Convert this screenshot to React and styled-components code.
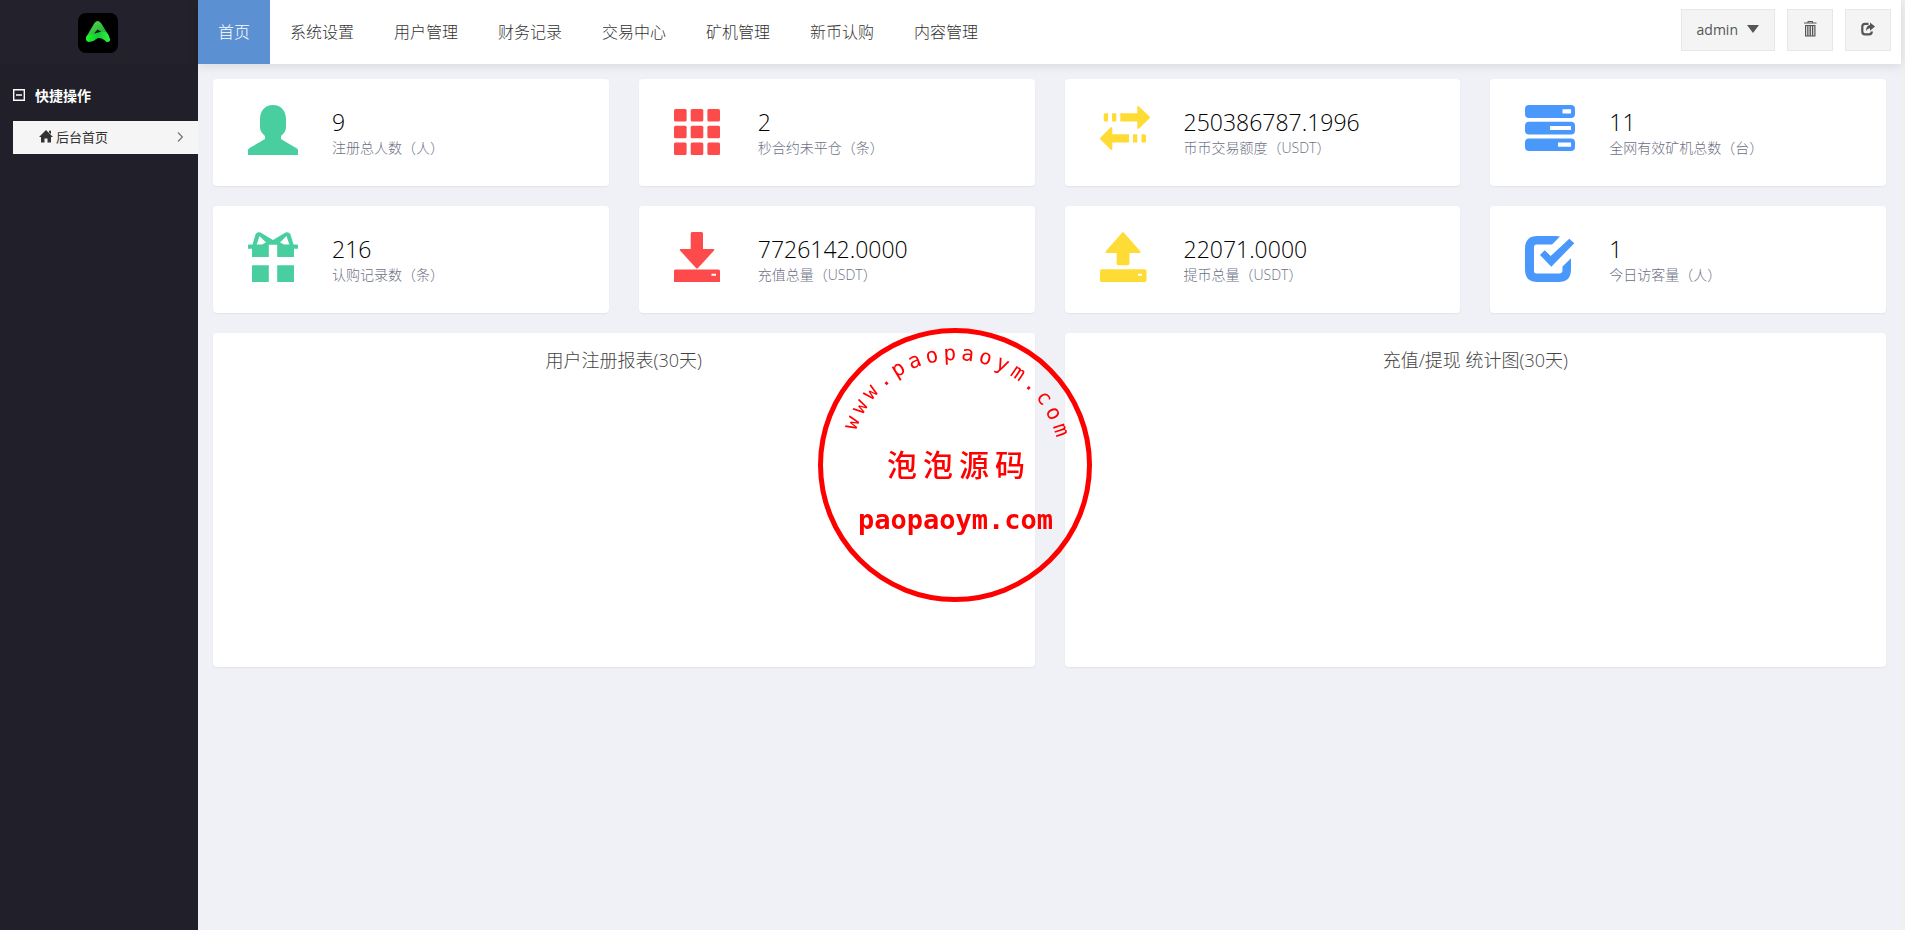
import React from 'react';
import styled, { createGlobalStyle } from 'styled-components';

const menus = ['首页', '系统设置', '用户管理', '财务记录', '交易中心', '矿机管理', '新币认购', '内容管理'];

const stats = [
    { icon: 'user', color: '#49cea0', value: '9', label: '注册总人数（人）' },
    { icon: 'grid', color: '#fd4b4b', value: '2', label: '秒合约未平仓（条）' },
    { icon: 'transfer', color: '#ffdc35', value: '250386787.1996', label: '币币交易额度（USDT）' },
    { icon: 'tasks', color: '#4a98fc', value: '11', label: '全网有效矿机总数（台）' },
    { icon: 'gift', color: '#49cea0', value: '216', label: '认购记录数（条）' },
    { icon: 'save', color: '#fd4b4b', value: '7726142.0000', label: '充值总量（USDT）' },
    { icon: 'open', color: '#ffdc35', value: '22071.0000', label: '提币总量（USDT）' },
    { icon: 'check', color: '#4a98fc', value: '1', label: '今日访客量（人）' },
];

const charts = ['用户注册报表(30天)', '充值/提现 统计图(30天)'];

const shapes = {
    user: <path d="M25 0C33 0 38 6 38 14V22C38 26 36 28.500 33 31V34C38 37 45 41 49 43.500Q50 44.200 50 45V50H0V45Q0 44.200 1 43.500C5 41 12 37 17 34V31C14 28.500 12 26 12 22V14C12 6 17 0 25 0Z" />,
    grid: [4, 20.7, 37.4].map((y) =>
        [0, 16.7, 33.4].map((x) => <rect key={`${x}-${y}`} x={x} y={y} width="12.600" height="12.600" rx="1.500" />)
    ),
    transfer: <path d="M5 8.300H8V16.500H5Q3.700 16.500 3.700 15V9.800Q3.700 8.300 5 8.300ZM12 8.300H16.300V16.500H12ZM20.300 8.300H37.300V1.500Q38 .6 39 1.500L49.500 11.500Q50.300 12.500 49.500 13.500L39 23.500Q38 24.300 37.300 23.500V16.500H20.300ZM12.300 29.300V22.500Q11.500 21.500 10.500 22.500L.5 32.500Q-.3 33.500 .5 34.500L10.500 44.500Q11.500 45.300 12.300 44.500V37.500H29V29.300ZM33 29.300H37.300V37.500H33ZM41.500 29.300H44.700Q46 29.300 46 30.800V36Q46 37.500 44.700 37.500H41.500Z" />,
    tasks: <path fillRule="evenodd" d="M4 0H46Q50 0 50 4V9Q50 13 46 13H4Q0 13 0 9V4Q0 0 4 0ZM37.500 4.200V8.400H46V4.200ZM4 16.700H46Q50 16.700 50 20.700V25.500Q50 29.500 46 29.500H4Q0 29.500 0 25.500V20.700Q0 16.700 4 16.700ZM25 20.900V25.100H46V20.900ZM4 33.400H46Q50 33.400 50 37.400V42Q50 46 46 46H4Q0 46 0 42V37.400Q0 33.400 4 33.400ZM33 37.600V41.800H46V37.600Z" />,
    gift: <path fillRule="evenodd" d="M4.500 12.500L7.500 2.500Q9 -.5 12.500 .5L25 8L37.500 .5Q41 -.5 42.500 2.500L45.500 12.500H49Q50 12.500 50 13.500V16.700H46V25H29.200V12.700H20.800V25H4V16.700H0V13.500Q0 12.500 1 12.500ZM11.500 4L8.700 12.500H14L18 10.500ZM38.500 4L41.300 12.500H36L32 10.500ZM4 33.300H20.800V50H4ZM29.200 33.300H46V50H29.200Z" />,
    save: <path fillRule="evenodd" d="M18 0H27.500Q29 0 29 1.500V17H39Q41 17 40 18.500L24 36Q23 37 22 36L6 18.500Q5 17 7 17H16.700V1.500Q16.700 0 18 0ZM1.500 37.500H44.500Q46 37.500 46 39V50H0V39Q0 37.500 1.500 37.500ZM37.500 41.700V43.800H42V41.700Z" />,
    open: <path fillRule="evenodd" d="M22.200 .5Q23 -.3 23.800 .5L40 19Q41.500 21 39.500 21H29.500V31.500Q29.500 33.300 28 33.300H18Q16.700 33.300 16.700 31.500V21H7Q4.500 21 6 19ZM1.500 37.300H44.500Q46.500 37.300 46.500 39V48.500Q46.500 50 44.500 50H1.500Q0 50 0 48.500V39Q0 37.300 1.500 37.300ZM38 41.700V43.800H42V41.700Z" />,
    check: <path d="M12.500 4H31Q33 4 35 4.600L27 12.500H11Q9 12.500 9 15V39Q9 41.500 11.500 41.500H34Q37.500 41.500 37.500 38V34.500L46 26.300V37.500Q46 50 33.500 50H12.500Q0 50 0 37.500V16.500Q0 4 12.500 4ZM15 23L19.700 18.300L25.700 24L44.300 6.700L49.300 11.300L26.300 34.700Z" />,
};

const Icon = ({ name }) => (
    <svg width="50" height="50" viewBox="0 0 50 50" fill="currentColor" aria-hidden="true">
        {shapes[name]}
    </svg>
);

// every letter of the upper line sits on a circle of radius 105 round (142, 140)
const arcText = 'www.paopaoym.com';
const arc = arcText.split('').map((_, i) => {
    const deg = -68 + i * 9.3;
    const rad = (deg * Math.PI) / 180;
    return {
        x: 142 + 105 * Math.sin(rad) - 6 * Math.cos(rad),
        y: 140 - 105 * Math.cos(rad) - 6 * Math.sin(rad),
        deg,
    };
});

const Stamp = () => (
    <StampSvg width="281" height="280" viewBox="0 0 281 280">
        <circle cx="142" cy="140" r="134.500" fill="none" stroke="#f00" strokeWidth="5" />
        <ArcLine
            x={arc.map((c) => c.x).join(' ')}
            y={arc.map((c) => c.y).join(' ')}
            rotate={arc.map((c) => c.deg).join(' ')}
        >
            {arcText}
        </ArcLine>
        <StampName x="74 110 146 182" y="151">泡泡源码</StampName>
        <StampSite x="45" y="204">paopaoym.com</StampSite>
    </StampSvg>
);

const App = () => {
    return (
        <Page>
            <GlobalStyle />
            <Sidebar>
                <LogoBar>
                    <Logo viewBox="0 0 40 40" role="img" aria-label="logo">
                        <defs>
                            <linearGradient id="leg" x1="0" y1="0" x2="1" y2="1">
                                <stop offset="0" stopColor="#5fe04c" />
                                <stop offset="1" stopColor="#15a03a" />
                            </linearGradient>
                            <linearGradient id="swoosh" x1="0" y1="0" x2="1" y2="0">
                                <stop offset="0" stopColor="#1dff1d" />
                                <stop offset=".5" stopColor="#12c83c" />
                                <stop offset="1" stopColor="#35f53c" />
                            </linearGradient>
                        </defs>
                        <rect width="40" height="40" rx="8" fill="#000" />
                        <path d="M16.500 10Q19.500 6 23 10L29.500 20.500L23 20.500L15 23L8.500 23.500Z" fill="url(#leg)" />
                        <path d="M16 20.500L19.500 16.500L23 18.500L21.500 20Z" fill="#03200a" />
                        <path d="M8.500 23Q11.500 20.500 15.500 21.500Q20 19 25 18.500Q29 18.500 30.500 22L32 26Q32.500 29.500 28.500 29Q24 24.500 20 25Q16 28.500 11 29Q7.500 28.500 8 25Z" fill="url(#swoosh)" />
                    </Logo>
                </LogoBar>
                <GroupTitle type="button">
                    <svg width="12" height="12" viewBox="0 0 12 12" aria-hidden="true">
                        <path d="M.7 .7H11.300V11.300H.7ZM3 6H9" fill="none" stroke="#fff" strokeWidth="1.400" />
                    </svg>
                    快捷操作
                </GroupTitle>
                <SideLink href="#">
                    <svg width="14" height="13" viewBox="0 0 14 13" fill="#333" aria-hidden="true">
                        <path d="M7 0L14 7H12V12.500H8.500V8.500H5.500V12.500H2V7H0ZM10 .8H12V4L10 2.500Z" />
                    </svg>
                    <span>后台首页</span>
                    <svg width="6" height="10" viewBox="0 0 6 10" aria-hidden="true">
                        <path d="M1 .5L5.300 5L1 9.500" fill="none" stroke="#777" strokeWidth="1.200" />
                    </svg>
                </SideLink>
            </Sidebar>
            <Main>
                <Header>
                    <Nav>
                        {menus.map((name, i) => (
                            <NavLink href="#" key={name} $active={i === 0}>{name}</NavLink>
                        ))}
                    </Nav>
                    <Tools>
                        <ToolButton type="button">
                            admin
                            <svg width="12" height="8" viewBox="0 0 12 8" fill="currentColor" aria-hidden="true">
                                <path d="M0 0H12L6 8Z" />
                            </svg>
                        </ToolButton>
                        <ToolButton type="button" aria-label="清除缓存">
                            <svg width="14" height="16" viewBox="0 0 14 16" fill="currentColor" aria-hidden="true">
                                <path fillRule="evenodd" d="M4.500 1.500V.5Q4.500 0 5 0H9.500Q10 0 10 .5V1.500H13.500V2.500H1V1.500ZM5.500 1V1.500H9V1ZM2 4H12.500V15.500H2ZM3.200 5V14.500H4.200V5ZM5.500 5V14.500H6.500V5ZM7.900 5V14.500H8.900V5ZM10.300 5V14.500H11.300V5Z" />
                            </svg>
                        </ToolButton>
                        <ToolButton type="button" aria-label="退出">
                            <svg width="14" height="14" viewBox="0 0 14 14" aria-hidden="true">
                                <path d="M7.500 1.800H4Q1.300 1.800 1.300 4.500V9.500Q1.300 12.300 4 12.300H8Q10.800 12.300 10.800 9.500" fill="none" stroke="currentColor" strokeWidth="2.200" />
                                <path d="M9 .5L14 4.500L9 8.700V6.300Q6.500 6.300 5 9Q5 3.500 9 3Z" fill="currentColor" />
                            </svg>
                        </ToolButton>
                    </Tools>
                </Header>
                <Content>
                    {stats.map((s) => (
                        <Card key={s.label}>
                            <IconBox $color={s.color}><Icon name={s.icon} /></IconBox>
                            <div>
                                <Value>{s.value}</Value>
                                <Label>{s.label}</Label>
                            </div>
                        </Card>
                    ))}
                    {charts.map((title) => (
                        <ChartCard key={title}><ChartTitle>{title}</ChartTitle></ChartCard>
                    ))}
                </Content>
            </Main>
            <Stamp />
        </Page>
    );
};

const GlobalStyle = createGlobalStyle`
    * {
        box-sizing: border-box;
    }

    body {
        margin: 0;
        background: #f0f0f0;
        font-family: "Open Sans", "Noto Sans CJK SC", sans-serif;
        font-size: 14px;
    }
`

const Page = styled.div`
    display: flex;
    min-height: 100vh;
    padding-right: 4px;
`

const Sidebar = styled.aside`
    flex: 0 0 198px;
    background: #211f29;
`

const LogoBar = styled.div`
    display: flex;
    align-items: center;
    justify-content: center;
    height: 64px;
    padding: 2px 2px 0 0;
    background: #23212b;
`

const Logo = styled.svg`
    width: 40px;
    height: 40px;
`

const GroupTitle = styled.button`
    display: flex;
    align-items: center;
    gap: 10px;
    width: 100%;
    height: 57px;
    padding: 8px 13px 4px;
    border: 0;
    background: none;
    color: #fff;
    font-family: inherit;
    font-size: 14px;
    font-weight: bold;
`

const SideLink = styled.a`
    display: flex;
    align-items: center;
    gap: 3px;
    height: 33px;
    margin-left: 13px;
    padding: 0 15px 2px 26px;
    background: #f5f5f5;
    color: #333;
    font-size: 13px;
    text-decoration: none;

    span {
        flex: 1;
    }
`

const Main = styled.main`
    flex: 1;
    min-width: 0;
    background: #f0f1f6;
`

const Header = styled.header`
    display: flex;
    justify-content: space-between;
    height: 64px;
    background: #fff;
    box-shadow: 0 2px 10px rgba(0, 0, 0, .1);
`

const Nav = styled.nav`
    display: flex;
`

const NavLink = styled.a`
    padding: 0 20px;
    background: ${(props) => (props.$active ? '#5b90d2' : 'transparent')};
    color: ${(props) => (props.$active ? '#fff' : '#333')};
    font-size: 16px;
    font-weight: 300;
    line-height: 64px;
    white-space: nowrap;
    text-decoration: none;
`

const Tools = styled.div`
    display: flex;
    gap: 12px;
    padding: 9px 10px 0 0;
`

const ToolButton = styled.button`
    display: flex;
    align-items: center;
    justify-content: center;
    gap: 9px;
    min-width: 46px;
    height: 42px;
    padding: 0 15px 2px;
    border: 1px solid #e7e7e7;
    background: #f4f4f4;
    color: #555;
    font-family: inherit;
    font-size: 14px;
`

const Content = styled.section`
    display: grid;
    grid-template-columns: repeat(4, 1fr);
    gap: 20px 30px;
    padding: 15px;
`

const Card = styled.div`
    display: flex;
    gap: 34px;
    height: 107px;
    padding: 26px 35px;
    border-radius: 4px;
    background: #fff;
    box-shadow: 0 1px 2px rgba(0, 0, 0, .06);
`

const IconBox = styled.div`
    flex: none;
    height: 50px;
    color: ${(props) => props.$color};
`

const Value = styled.div`
    padding-top: 2px;
    color: #000;
    font-size: 23px;
    font-weight: 300;
    line-height: 31px;
`

const Label = styled.div`
    color: #6c7084;
    font-weight: 300;
    line-height: 20px;
    white-space: nowrap;
`

const ChartCard = styled.div`
    grid-column: span 2;
    height: 334px;
    border-radius: 4px;
    background: #fff;
    box-shadow: 0 1px 2px rgba(0, 0, 0, .06);
`

const ChartTitle = styled.h2`
    margin: 0;
    padding-top: 14px;
    color: #444;
    font-size: 18px;
    font-weight: 300;
    line-height: 26px;
    text-align: center;
`

const StampSvg = styled.svg`
    position: fixed;
    top: 50%;
    left: 50%;
    margin: -140px 0 0 -140px;
    fill: #f00;
    pointer-events: none;
`

const ArcLine = styled.text`
    font-family: "DejaVu Sans Mono", monospace;
    font-size: 21px;
`

const StampName = styled.text`
    font-family: "Noto Sans CJK SC", sans-serif;
    font-size: 30px;
    font-weight: 500;
`

const StampSite = styled.text`
    font-family: "DejaVu Sans Mono", monospace;
    font-size: 27px;
    font-weight: bold;
`

export default App;
